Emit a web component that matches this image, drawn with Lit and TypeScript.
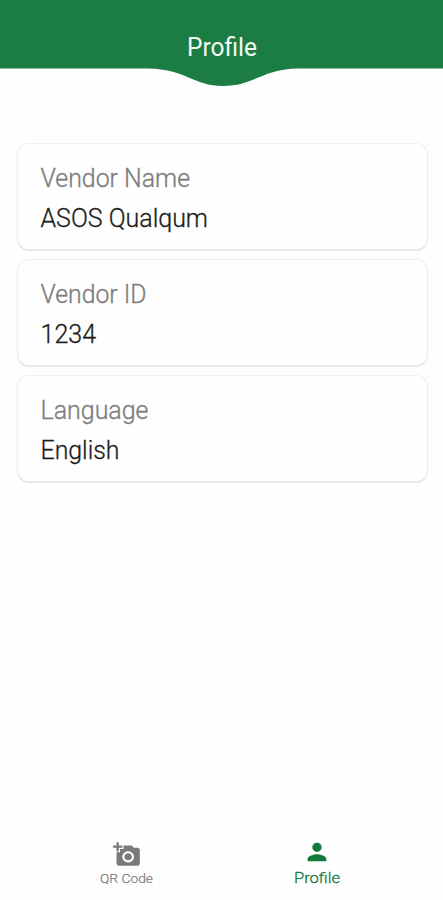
import { LitElement, html, css, svg } from "lit";
import { customElement } from "lit/decorators.js";

const FIELDS = [
  { label: "Vendor Name", value: "ASOS Qualqum", labelWidth: 149.5, valueWidth: 167.5 },
  { label: "Vendor ID", value: "1234", labelWidth: 106, valueWidth: 55.5 },
  { label: "Language", value: "English", labelWidth: 108, valueWidth: 79 },
];

// SVG text keeps each line at its exact measured width.
const line = (text: string, width: number, cls: string) => html`
  <svg class="line ${cls}" width="220" height="32">
    ${svg`<text x="-0.5" y="24" textLength=${width} lengthAdjust="spacingAndGlyphs">${text}</text>`}
  </svg>
`;

@customElement("app-root")
export class AppRoot extends LitElement {
  static styles = css`
    :host {
      display: flex;
      flex-direction: column;
      box-sizing: border-box;
      height: 900px;
      background: #fefefe;
      font-family: Roboto, "Liberation Sans", sans-serif;
      font-weight: 300;
      overflow: hidden;
    }
    header {
      height: 68px;
      flex: none;
      position: relative;
      background: #1b7d43;
    }
    .wave {
      position: absolute;
      top: 0;
      left: 0;
      display: block;
    }
    .title { fill: #f0f8f2; font-size: 25px; font-weight: 400; }
    main {
      flex: 1;
      display: flex;
      flex-direction: column;
      gap: 9px;
      padding: 75px 15px 0 17px;
    }
    .card {
      box-sizing: border-box;
      height: 107px;
      padding: 19px 22px 0 23px;
      border: 1px solid #efefef;
      border-bottom-color: #e8e8e8;
      border-radius: 12px;
      background: #fefefe;
      box-shadow: 0 1px 1px #e4e4e4;
    }
    .line { display: block; overflow: visible; font-size: 25px; stroke-width: 0.3px; }
    .label { fill: #7c7c7c; stroke: #7c7c7c; margin-bottom: 8px; }
    .value { fill: #1c1c1c; stroke: #1c1c1c; }
    nav {
      flex: none;
      height: 68px;
      display: grid;
      grid-template-columns: 190px 190px;
      justify-content: center;
    }
    .tab { display: flex; flex-direction: column; align-items: center; color: #7a7a7a; }
    .tab svg { display: block; fill: currentColor; }
    .active { color: #14793a; }
    .camera { margin: 9px 0 1px; }
    .person { margin-top: 6px; }
    .caption { font-size: 13px; overflow: visible; stroke: currentColor; stroke-width: 0.2px; }
    .active .caption { font-size: 15.5px; stroke-width: 0.3px; }
  `;

  render() {
    return html`
      <header>
        <svg class="wave" width="443" height="90">
          <path fill="#1b7d43" d="M0 0H443V68.500H298C262 69 254 86 223 86C193 86 186 69 148 68.500H0Z" />
          <text class="title" x="187" y="56" textLength="70" lengthAdjust="spacingAndGlyphs">Profile</text>
        </svg>
      </header>
      <main>
        ${FIELDS.map(
          (f) => html`<section class="card">
            ${line(f.label, f.labelWidth, "label")}${line(f.value, f.valueWidth, "value")}
          </section>`,
        )}
      </main>
      <nav>
        <div class="tab">
          <svg class="camera" width="28" height="27" viewBox="0 0 24 24" preserveAspectRatio="none">
            <path fill-rule="evenodd" d="M3 4V1h2v3h3v2H5v3H3V6H0V4h3zM6 10V7h3V4h7l1.830 2H21c1.100 0 2 .9 2 2v12c0 1.100-.9 2-2 2H5c-1.100 0-2-.9-2-2V10h3zM13 19c2.760 0 5-2.240 5-5s-2.240-5-5-5-5 2.240-5 5 2.240 5 5 5zM9.800 14c0 1.770 1.430 3.200 3.200 3.200s3.200-1.430 3.200-3.200-1.430-3.200-3.200-3.200-3.200 1.430-3.200 3.200z" />
          </svg>
          <svg class="caption" width="53" height="20">
            <text x="0" y="14" textLength="53" lengthAdjust="spacingAndGlyphs">QR Code</text>
          </svg>
        </div>
        <div class="tab active">
          <svg class="person" width="28" height="28" viewBox="0 0 24 24">
            <path d="M12 12c2.210 0 4-1.790 4-4s-1.790-4-4-4-4 1.790-4 4 1.790 4 4 4zm0 2c-2.670 0-8 1.340-8 4v2h16v-2c0-2.660-5.330-4-8-4z" />
          </svg>
          <svg class="caption" width="46" height="20">
            <text x="0" y="17" textLength="46" lengthAdjust="spacingAndGlyphs">Profile</text>
          </svg>
        </div>
      </nav>
    `;
  }
}
